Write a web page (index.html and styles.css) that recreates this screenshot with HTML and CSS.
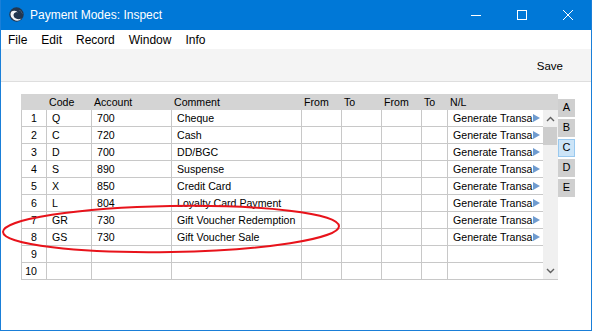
FILE: index.html
```html
<!DOCTYPE html>
<html lang="en">
<head>
  <meta charset="UTF-8" />
  <title>Payment Modes: Inspect</title>
  <link rel="stylesheet" href="styles.css">
</head>
<body>
  <div class="window">
    <div class="titlebar">
      <svg class="app-icon" width="15" height="15" viewBox="0 0 15 15">
        <circle cx="7.5" cy="7.5" r="7.2" fill="#22364f" />
        <path d="M2.2 4.8 A6.3 6.3 0 0 0 12.6 11.6 A5.2 4.2 0 0 1 4.6 7.4 A3 3 0 0 1 8.8 5.4 A4.5 4 0 0 0 2.2 4.8 Z" fill="#f2f4f7" />
        <path d="M9.5 3 A4 4 0 0 1 13.2 7.6 A5 5 0 0 0 9.5 3 Z" fill="#c9d3df" />
      </svg>
      <span class="title">Payment Modes: Inspect</span>
      <div class="controls">
        <div class="ctl">
          <svg width="10" height="10" viewBox="0 0 10 10"><path d="M0 5.5 H10" stroke="#fff" stroke-width="1" /></svg>
        </div>
        <div class="ctl">
          <svg width="10" height="10" viewBox="0 0 10 10"><rect x="0.5" y="0.5" width="9" height="9" fill="none" stroke="#fff" stroke-width="1" /></svg>
        </div>
        <div class="ctl">
          <svg width="10" height="10" viewBox="0 0 10 10"><path d="M0 0 L10 10 M10 0 L0 10" stroke="#fff" stroke-width="1" /></svg>
        </div>
      </div>
    </div>

    <div class="menubar">
      <span>File</span>
      <span>Edit</span>
      <span>Record</span>
      <span>Window</span>
      <span>Info</span>
    </div>

    <div class="toolbar">
      <span class="save">Save</span>
    </div>

    <div class="content">
      <div class="sheet">
        <div class="grid">
          <div class="grid-head">
            <div></div>
            <div>Code</div>
            <div>Account</div>
            <div>Comment</div>
            <div>From</div>
            <div>To</div>
            <div>From</div>
            <div>To</div>
            <div>N/L</div>
          </div>
          <div class="grid-body">
            <div class="cells" id="cells"></div>
            <div class="scrollbar">
              <div class="arrow">
                <svg width="9" height="6" viewBox="0 0 9 6"><path d="M1 5 L4.5 1.5 L8 5" fill="none" stroke="#606060" stroke-width="1.4" /></svg>
              </div>
              <div class="thumb"></div>
              <div class="track"></div>
              <div class="arrow">
                <svg width="9" height="6" viewBox="0 0 9 6"><path d="M1 1 L4.5 4.5 L8 1" fill="none" stroke="#606060" stroke-width="1.4" /></svg>
              </div>
            </div>
          </div>
        </div>
        <div class="tabs">
          <div class="tab">A</div>
          <div class="tab">B</div>
          <div class="tab active">C</div>
          <div class="tab">D</div>
          <div class="tab">E</div>
        </div>
      </div>
    </div>

    <svg class="mark" width="345" height="62" viewBox="0 0 345 62">
      <ellipse cx="170" cy="30" rx="168" ry="23" fill="none" stroke="#e8131b" stroke-width="2" transform="rotate(-1 170 30)" />
    </svg>
  </div>

  <script>
    // rows of the payment modes list
    var rows = [
      ['Q', '700', 'Cheque'],
      ['C', '720', 'Cash'],
      ['D', '700', 'DD/BGC'],
      ['S', '890', 'Suspense'],
      ['X', '850', 'Credit Card'],
      ['L', '804', 'Loyalty Card Payment'],
      ['GR', '730', 'Gift Voucher Redemption'],
      ['GS', '730', 'Gift Voucher Sale'],
      null,
      null
    ];
    var cells = document.getElementById('cells');
    var html = '';
    for (var i = 0; i < rows.length; i++) {
      var r = rows[i];
      html += '<div class="c num">' + (i + 1) + '</div>';
      if (r) {
        html += '<div class="c">' + r[0] + '</div>';
        html += '<div class="c">' + r[1] + '</div>';
        html += '<div class="c">' + r[2] + '</div>';
      } else {
        html += '<div class="c"></div><div class="c"></div><div class="c"></div>';
      }
      html += '<div class="c"></div><div class="c"></div><div class="c"></div><div class="c"></div>';
      // the N/L column is too narrow, the list shows only the start of the text
      if (r) {
        html += '<div class="c nl"><span>Generate Transa</span><i></i></div>';
      } else {
        html += '<div class="c"></div>';
      }
    }
    cells.innerHTML = html;
  </script>
</body>
</html>
```

FILE: styles.css
```css
* {
  box-sizing: border-box;
}

body {
  margin: 0;
  width: 592px;
  height: 331px;
  overflow: hidden;
  font-family: "Liberation Sans", Arial, sans-serif;
  color: #000;
}

.window {
  position: relative;
  width: 592px;
  height: 331px;
  border: 1px solid #1a7fd8;
  border-top: none;
  display: flex;
  flex-direction: column;
  background: #fff;
}

.titlebar {
  height: 30px;
  background: #0078d7;
  display: flex;
  align-items: center;
  color: #fff;
}

.app-icon {
  margin-left: 8px;
  margin-top: -1px;
}

.title {
  margin-left: 6px;
  font-size: 12px;
}

.controls {
  margin-left: auto;
  display: flex;
  height: 100%;
}

.ctl {
  width: 46px;
  height: 100%;
  display: flex;
  align-items: center;
  justify-content: center;
}

.menubar {
  height: 19px;
  display: flex;
  align-items: center;
  gap: 14px;
  padding-left: 7px;
  font-size: 12px;
}

.toolbar {
  height: 33px;
  background: #f4f4f4;
  border-bottom: 1px solid #dedede;
  display: flex;
  align-items: center;
  justify-content: flex-end;
  padding-right: 28px;
}

.save {
  font-size: 11.5px;
  margin-top: 2px;
}

.content {
  flex: 1;
  padding: 12px 0 0 20px;
}

.sheet {
  display: flex;
}

.grid {
  width: 537px;
  font-size: 10.6px;
}

.grid-head {
  height: 16px;
  background: #d4d4d4;
  display: grid;
  grid-template-columns: 25px 45px 80px 130px 40px 40px 40px 26px 111px;
  align-items: center;
}

.grid-head div {
  padding-left: 3px;
}

.grid-body {
  display: flex;
  height: 170px;
}

.cells {
  width: 522px;
  display: grid;
  grid-template-columns: 25px 45px 80px 130px 40px 40px 40px 26px 96px;
  grid-auto-rows: 17px;
  border-left: 1px solid #c8c8c8;
}

.c {
  border-right: 1px solid #c8c8c8;
  border-bottom: 1px solid #c8c8c8;
  padding-left: 5px;
  display: flex;
  align-items: center;
  white-space: nowrap;
  overflow: hidden;
}

.c.num {
  justify-content: flex-end;
  padding-left: 0;
  padding-right: 9px;
}

.c.nl {
  padding-left: 5px;
  padding-right: 2px;
}

.c.nl span {
  flex: 1;
}

.c.nl i {
  width: 0;
  height: 0;
  border-top: 4px solid transparent;
  border-bottom: 4px solid transparent;
  border-left: 7px solid #6f9bcf;
  margin-right: 1px;
}

.scrollbar {
  width: 15px;
  background: #f0f0f0;
  border-bottom: 1px solid #c8c8c8;
  display: flex;
  flex-direction: column;
}

.scrollbar .arrow {
  height: 17px;
  display: flex;
  align-items: center;
  justify-content: center;
}

.scrollbar .thumb {
  height: 18px;
  margin: 0 1px 0 0;
  background: #cdcdcd;
}

.scrollbar .track {
  flex: 1;
}

.tabs {
  width: 17px;
  padding-top: 5px;
  display: flex;
  flex-direction: column;
  gap: 2px;
}

.tab {
  height: 18px;
  background: #cfcfcf;
  font-size: 11px;
  text-align: center;
  padding-top: 2px;
}

.tab.active {
  background: #cce4f7;
  border: 1px solid #99c9ef;
  padding-top: 1px;
}

.mark {
  position: absolute;
  left: 0;
  top: 199px;
}
```
